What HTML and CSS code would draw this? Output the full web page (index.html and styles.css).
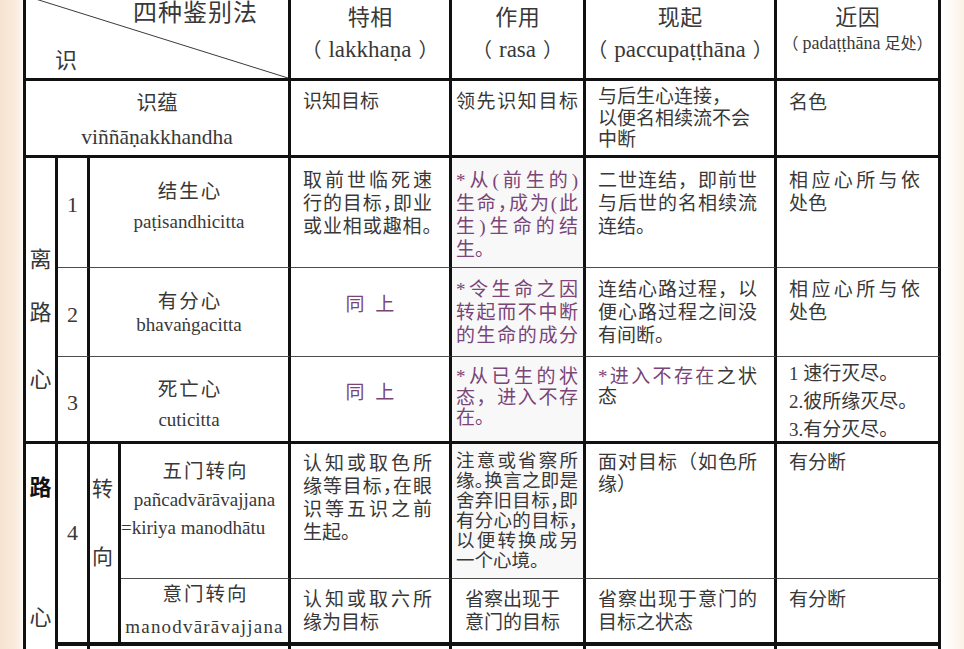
FILE: index.html
```html
<!DOCTYPE html>
<html lang="zh">
<head>
<meta charset="utf-8">
<title>四种鉴别法</title>
<link rel="stylesheet" href="styles.css">
</head>
<body>
<div class="sheet">
  <!-- header row -->
  <div class="c gA r1 hA">
    <svg class="diag" viewBox="0 0 100 100" preserveAspectRatio="none"><line x1="0" y1="0" x2="100" y2="100"/></svg>
    <div class="hA-top">四种鉴别法</div>
    <div class="hA-bot">识</div>
  </div>
  <div class="c gB r1 hd"><span class="l hz">特相</span><span class="l">（<span class="pt">lakkhaṇa</span>）</span></div>
  <div class="c gC r1 hd"><span class="l hz">作用</span><span class="l">（<span class="pt">rasa</span>）</span></div>
  <div class="c gD r1 hd"><span class="l hz">现起</span><span class="l">（<span class="pt">paccupaṭṭhāna</span>）</span></div>
  <div class="c gE r1 hd"><span class="l hz">近因</span><span class="l hsm">（<span class="ps">padaṭṭhāna</span> 足处）</span></div>

  <!-- 识蕴 row -->
  <div class="c gA r2 nm nmA"><span class="l">识蕴</span><span class="l la">viññāṇakkhandha</span></div>
  <div class="c gB r2 pB t2"><span class="l">识知目标</span></div>
  <div class="c gC r2 pC t2"><span class="l j">领先识知目标</span></div>
  <div class="c gD r2 pD t2d"><span class="l">与后生心连接，</span><span class="l">以便名相续流不会</span><span class="l">中断</span></div>
  <div class="c gE r2 pE t2e"><span class="l">名色</span></div>

  <!-- 离路心 column -->
  <div class="c gL r35 vt vt1"><span class="l v1">离</span><span class="l v2">路</span><span class="l v3">心</span></div>

  <!-- row 1 -->
  <div class="c gN r3 thin num n1">1</div>
  <div class="c gNm r3 thin nm nm1"><span class="l zh">结生心</span><span class="l">paṭisandhicitta</span></div>
  <div class="c gB r3 thin pB t3"><span class="l j">取前世临死速</span><span class="l j">行的目标<span class="h">，</span>即业</span><span class="l j">或业相或趣相<span class="h">。</span></span></div>
  <div class="c gC r3 thin pC t3 shade pu"><span class="l j">*从(前生的)</span><span class="l j">生命<span class="h">，</span>成为(此</span><span class="l j">生)生命的结</span><span class="l">生。</span></div>
  <div class="c gD r3 thin pD t3"><span class="l j">二世连结，即前世</span><span class="l j">与后世的名相续流</span><span class="l">连结。</span></div>
  <div class="c gE r3 thin pE t3"><span class="l j">相应心所与依</span><span class="l">处色</span></div>

  <!-- row 2 -->
  <div class="c gN r4 thin num n2">2</div>
  <div class="c gNm r4 thin nm nm2"><span class="l zh">有分心</span><span class="l">bhavaṅgacitta</span></div>
  <div class="c gB r4 thin tong tg2">同 上</div>
  <div class="c gC r4 thin pC t4 shade pu"><span class="l j">*令生命之因</span><span class="l j">转起而不中断</span><span class="l j">的生命的成分</span></div>
  <div class="c gD r4 thin pD t4"><span class="l j">连结心路过程，以</span><span class="l j">便心路过程之间没</span><span class="l">有间断。</span></div>
  <div class="c gE r4 thin pE t4"><span class="l j">相应心所与依</span><span class="l">处色</span></div>

  <!-- row 3 -->
  <div class="c gN r5 num n3">3</div>
  <div class="c gNm r5 nm nm3"><span class="l zh">死亡心</span><span class="l">cuticitta</span></div>
  <div class="c gB r5 tong tg3">同 上</div>
  <div class="c gC r5 pC t5c shade pu"><span class="l j">*从已生的状</span><span class="l j">态，进入不存</span><span class="l">在。</span></div>
  <div class="c gD r5 pD t5d"><span class="l j"><span class="pu">*进入不存在</span>之状</span><span class="l">态</span></div>
  <div class="c gE r5 pE t5e"><span class="l">1 速行灭尽。</span><span class="l">2.彼所缘灭尽。</span><span class="l">3.有分灭尽。</span></div>

  <!-- 路心 column -->
  <div class="c gL r68 nob vt vt2"><span class="l w1">路</span><span class="l w2">心</span></div>
  <div class="c gN r67 num n4 bot">4</div>
  <div class="c gT r67 vt vt3 bot"><span class="l x1">转</span><span class="l x2">向</span></div>

  <!-- row 五门 -->
  <div class="c gN4 r6 thin nm nm5"><span class="l zh">五门转向</span><span class="l">pañcadvārāvajjana</span><span class="l left">=kiriya manodhātu</span></div>
  <div class="c gB r6 thin pB t6"><span class="l j">认知或取色所</span><span class="l j">缘等目标<span class="h">，</span>在眼</span><span class="l j">识等五识之前</span><span class="l">生起。</span></div>
  <div class="c gC r6 thin pC t6c shade"><span class="l j">注意或省察所</span><span class="l j">缘<span class="h">。</span>换言之即是</span><span class="l j">舍弃旧目标<span class="h">，</span>即</span><span class="l j">有分心的目标<span class="h">，</span></span><span class="l j">以便转换成另</span><span class="l">一个心境。</span></div>
  <div class="c gD r6 thin pD t6d"><span class="l j">面对目标（如色所</span><span class="l">缘）</span></div>
  <div class="c gE r6 thin pE t6d"><span class="l">有分断</span></div>

  <!-- row 意门 -->
  <div class="c gN4 r7 nm nm6 bot"><span class="l zh">意门转向</span><span class="l wide">manodvārāvajjana</span></div>
  <div class="c gB r7 pB t7 bot"><span class="l j">认知或取六所</span><span class="l">缘为目标</span></div>
  <div class="c gC r7 pC t7 ind bot"><span class="l">省察出现于</span><span class="l">意门的目标</span></div>
  <div class="c gD r7 pD t7 bot"><span class="l j">省察出现于意门的</span><span class="l">目标之状态</span></div>
  <div class="c gE r7 pE t7 bot"><span class="l">有分断</span></div>

  <!-- continuation row (cut off by the window) -->
  <div class="c gN r8 nob"></div>
  <div class="c gTN r8 nob"></div>
  <div class="c gB r8 nob"></div>
  <div class="c gC r8 nob"></div>
  <div class="c gD r8 nob"></div>
  <div class="c gE r8 nob"></div>
</div>
</body>
</html>
```

FILE: styles.css
```css
html, body {
  margin: 0;
  padding: 0;
  height: 100%;
  overflow: hidden;
}

body {
  background: linear-gradient(to right, #f6e3cf 0px, #f9ebdc 15px, #fcf3ea 21px, #ffffff 24px, #ffffff 943px, #fbf2e6 964px);
}

.sheet {
  box-sizing: border-box;
  width: 918px;
  margin: -7px 0 0 23px;
  border-top: 3px solid #111;
  border-left: 3px solid #111;
  display: grid;
  grid-template-columns: 32px 32px 31px 170px 161px 134px 191px 164px;
  grid-template-rows: 85px 77px 110px 89px 87px 135px 67px 60px;
  background: #fff;
  color: #383838;
  font-family: "Liberation Serif", "DejaVu Serif", "Noto Sans CJK SC", serif;
  font-size: 19px;
  line-height: 23px;
}

/* cells */
.c {
  box-sizing: border-box;
  border-right: 3px solid #111;
  border-bottom: 3px solid #111;
  min-width: 0;
}
.thin { border-bottom: 1px solid #4d4d4d; }
.nob { border-bottom: none; }
.bot { border-bottom-width: 4px; }

.l { display: block; }
.j { text-align: justify; text-align-last: justify; }
.h { font-feature-settings: "halt"; }
.pu { color: #7a4577; }
.shade { background: #f8f8f9; }

/* grid columns */
.gA { grid-column: 1 / 5; }
.gL { grid-column: 1; }
.gN { grid-column: 2; }
.gNm { grid-column: 3 / 5; }
.gT { grid-column: 3; }
.gN4 { grid-column: 4; }
.gTN { grid-column: 3 / 5; }
.gB { grid-column: 5; }
.gC { grid-column: 6; }
.gD { grid-column: 7; }
.gE { grid-column: 8; }

/* grid rows */
.r1 { grid-row: 1; }
.r2 { grid-row: 2; }
.r3 { grid-row: 3; }
.r4 { grid-row: 4; }
.r5 { grid-row: 5; }
.r6 { grid-row: 6; }
.r7 { grid-row: 7; }
.r8 { grid-row: 8; }
.r35 { grid-row: 3 / 6; }
.r67 { grid-row: 6 / 8; }
.r68 { grid-row: 6 / 9; }

/* header */
.hA { position: relative; }
.diag {
  position: absolute;
  left: 0;
  top: 0;
  width: 100%;
  height: 100%;
  overflow: visible;
}
.diag line {
  stroke: #3a3a3a;
  stroke-width: 1;
  vector-effect: non-scaling-stroke;
}
.hA-top {
  font-size: 24px;
  line-height: 24px;
  letter-spacing: 1px;
  padding: 5px 0 0 107px;
}
.hA-bot {
  font-size: 22px;
  line-height: 22px;
  padding: 25px 0 0 29px;
}
.hd {
  text-align: center;
  padding-top: 6px;
  font-size: 20px;
  line-height: 32px;
}
.hz { font-size: 22px; letter-spacing: 0.5px; padding-left: 0.5px; }
.pt { font-size: 23px; padding: 0 7px; }
.hsm { font-size: 16px; line-height: 18px; }
.ps { font-size: 18px; padding-left: 4px; }

/* name cells */
.nm { text-align: center; }
.zh { font-size: 19.5px; letter-spacing: 2px; padding-left: 2px; }
.nmA { padding-top: 5px; line-height: 34px; font-size: 20.5px; }
.la { font-size: 21.5px; }
.nm1 { padding-top: 19px; line-height: 30px; }
.nm2 { padding-top: 22px; line-height: 23px; }
.nm3 { padding-top: 18px; line-height: 30px; }
.nm5 { padding-top: 14px; line-height: 28px; }
.nm6 { padding-top: 0; line-height: 32px; }
.left { text-align: left; }
.wide { letter-spacing: 1.2px; }

/* vertical label columns */
.vt { text-align: center; font-size: 22px; line-height: 22px; }
.vt1 { padding-top: 91px; }
.v2 { margin-top: 31px; }
.v3 { margin-top: 45px; }
.vt2 { padding-top: 33px; }
.w1 { font-weight: bold; color: #111; }
.w2 { margin-top: 108px; }
.vt3 { padding: 35px 3px 0 0; font-size: 21px; line-height: 21px; }
.x2 { margin-top: 47px; }

/* number column */
.num { text-align: center; font-size: 22px; line-height: 22px; }
.n1 { padding-top: 36px; }
.n2 { padding-top: 36px; }
.n3 { padding-top: 35px; }
.n4 { padding-top: 78px; }

/* body cell paddings per column */
.pB { padding-left: 12px; padding-right: 17px; }
.pC { padding-left: 4px; padding-right: 5px; }
.pD { padding-left: 12px; padding-right: 17px; }
.pE { padding-left: 12px; padding-right: 18px; }

/* body cell vertical rhythm per row */
.t2 { padding-top: 10px; line-height: 22px; }
.t2d { padding-top: 5px; line-height: 21.5px; }
.t2e { padding-top: 11px; line-height: 22px; }
.t3 { padding-top: 11px; line-height: 23px; }
.t4 { padding-top: 10px; line-height: 23px; }
.t5c { padding-top: 10px; line-height: 20.5px; }
.t5d { padding-top: 10px; line-height: 20px; }
.t5e { padding-top: 3px; line-height: 28px; }
.t6 { padding-top: 8px; line-height: 23px; }
.t6c { padding-top: 7px; line-height: 20px; font-size: 18.5px; }
.t6d { padding-top: 8px; line-height: 22px; }
.t7 { padding-top: 9px; line-height: 23px; }
.ind { padding-left: 13px; }

.tong {
  color: #7a4577;
  text-align: center;
  word-spacing: 6px;
  line-height: 23px;
}
.tg2 { padding-top: 25px; }
.tg3 { padding-top: 24px; }
```
